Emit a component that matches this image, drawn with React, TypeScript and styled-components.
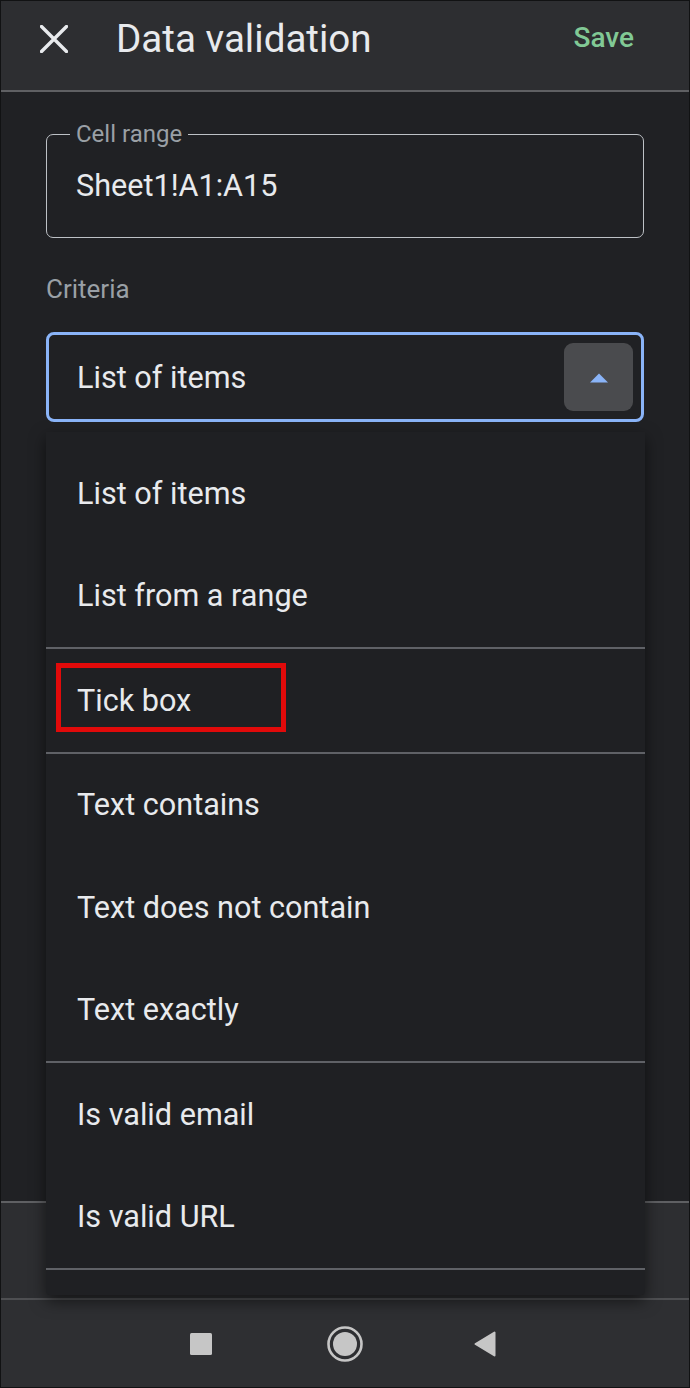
import React from "react";
import styled, { createGlobalStyle } from "styled-components";

const Global = createGlobalStyle`
  html, body { margin: 0; padding: 0; background: #202124; }
  * { box-sizing: border-box; }
`;

const Root = styled.div`
  width: 690px;
  height: 1388px;
  display: flex;
  flex-direction: column;
  background: #202124;
  border: 1px solid #111213;
  font-family: Roboto, "Noto Sans", Arial, sans-serif;
  color: #e8eaed;
  overflow: hidden;
`;

const Header = styled.header`
  flex: 0 0 91px;
  display: flex;
  align-items: center;
  padding: 0 55px 13px 39px;
  background: #2d2e31;
  border-bottom: 2px solid #5f6063;
`;

const CloseButton = styled.button`
  width: 28px;
  height: 28px;
  padding: 0;
  border: 0;
  background: none;
  display: flex;
  color: #e8eaed;
`;

const Title = styled.h1`
  margin: 0 0 0 48px;
  flex: 1;
  font-size: 38.6px;
  font-weight: 400;
  line-height: 44px;
  color: #e8eaed;
`;

const SaveButton = styled.span`
  font-size: 28px;
  font-weight: 500;
  color: #81c995;
  line-height: 34px;
  margin-bottom: 2px;
`;

const Main = styled.main`
  flex: 1;
  padding: 0 45px;
  display: flex;
  flex-direction: column;
`;

const Field = styled.fieldset`
  margin: 30px 0 0;
  padding: 0 0 33px 29px;
  border: 1.5px solid #bdc1c6;
  border-radius: 7px;
`;

const Legend = styled.legend`
  margin-left: -6px;
  padding: 0 6px;
  font-size: 24px;
  line-height: 24px;
  color: #9aa0a6;
`;

const FieldValue = styled.div`
  margin-top: 22px;
  font-size: 30.6px;
  line-height: 36px;
  color: #e8eaed;
`;

const SectionLabel = styled.div`
  margin-top: 36px;
  font-size: 26px;
  line-height: 30px;
  color: #9aa0a6;
`;

const SelectWrap = styled.div`
  position: relative;
  margin-top: 28px;
`;

const Select = styled.div`
  height: 90px;
  display: flex;
  align-items: center;
  justify-content: space-between;
  padding: 0 8px 0 28px;
  border: 3px solid #8ab4f8;
  border-radius: 8px;
  font-size: 30.6px;
  color: #e8eaed;
`;

const ToggleButton = styled.div`
  width: 69px;
  height: 68px;
  border-radius: 9px;
  background: #4a4b4e;
  display: flex;
  align-items: center;
  justify-content: center;
  padding-top: 2px;
`;

const Menu = styled.div`
  position: absolute;
  z-index: 10;
  top: calc(100% + 10px);
  left: 0;
  right: -1px;
  height: 863px;
  padding-top: 10px;
  background: #1f2023;
  border-radius: 0 0 4px 4px;
  box-shadow: 0 6px 16px rgba(0, 0, 0, 0.55);
  overflow: hidden;
`;

const MenuItem = styled.div`
  position: relative;
  height: 102.5px;
  display: flex;
  align-items: center;
  padding-left: 31px;
  font-size: 30.6px;
  color: #e8eaed;
`;

const Divider = styled.div`
  height: 2px;
  background: #5f6166;
`;

const Highlight = styled.div`
  position: absolute;
  left: 10px;
  top: 14px;
  width: 230px;
  height: 69px;
  border: 5px solid #e10a0a;
`;

const BottomPanel = styled.div`
  flex: 0 0 97px;
  background: #2d2e31;
  border-top: 2px solid #5f6063;
`;

const NavBar = styled.nav`
  flex: 0 0 89px;
  display: flex;
  align-items: center;
  justify-content: center;
  padding-right: 4px;
  background: #2e2f32;
  border-top: 2px solid #4e4f52;
`;

const NavIcon = styled.svg<{ $gap?: number }>`
  display: block;
  color: #c6c6c6;
  margin-left: ${(p) => p.$gap ?? 0}px;
`;

const groups: string[][] = [
  ["List of items", "List from a range"],
  ["Tick box"],
  ["Text contains", "Text does not contain", "Text exactly"],
  ["Is valid email", "Is valid URL"],
];

export default function App() {
  return (
    <Root>
      <Global />
      <Header>
        <CloseButton aria-label="Close">
          <svg width="28" height="28" viewBox="0 0 28 28">
            <path d="M1.5 1.5 L26.5 26.5 M26.5 1.5 L1.5 26.5" stroke="currentColor" strokeWidth="3.4" strokeLinecap="round" />
          </svg>
        </CloseButton>
        <Title>Data validation</Title>
        <SaveButton>Save</SaveButton>
      </Header>
      <Main>
        <Field>
          <Legend>Cell range</Legend>
          <FieldValue>Sheet1!A1:A15</FieldValue>
        </Field>
        <SectionLabel>Criteria</SectionLabel>
        <SelectWrap>
          <Select>
            <span>List of items</span>
            <ToggleButton>
              <svg width="20" height="10" viewBox="0 0 20 10">
                <path d="M1 9.5 L10 0.5 L19 9.5 Z" fill="#8ab4f8" />
              </svg>
            </ToggleButton>
          </Select>
          <Menu>
            {groups.map((g, gi) => (
              <React.Fragment key={gi}>
                {gi > 0 && <Divider />}
                {g.map((label) => (
                  <MenuItem key={label}>
                    {label}
                    {label === "Tick box" && <Highlight />}
                  </MenuItem>
                ))}
              </React.Fragment>
            ))}
            <Divider />
          </Menu>
        </SelectWrap>
      </Main>
      <BottomPanel />
      <NavBar>
        <NavIcon width="22" height="22" viewBox="0 0 22 22">
          <rect x="0" y="0" width="22" height="22" rx="1.5" fill="currentColor" />
        </NavIcon>
        <NavIcon $gap={115} width="36" height="36" viewBox="0 0 36 36">
          <circle cx="18" cy="18" r="16.5" fill="none" stroke="currentColor" strokeWidth="2.6" />
          <circle cx="18" cy="18" r="12" fill="currentColor" />
        </NavIcon>
        <NavIcon $gap={111} width="22" height="26" viewBox="0 0 22 26">
          <path d="M1.5 13 L20.5 1.5 L20.5 24.5 Z" fill="currentColor" stroke="currentColor" strokeWidth="2" strokeLinejoin="round" />
        </NavIcon>
      </NavBar>
    </Root>
  );
}
